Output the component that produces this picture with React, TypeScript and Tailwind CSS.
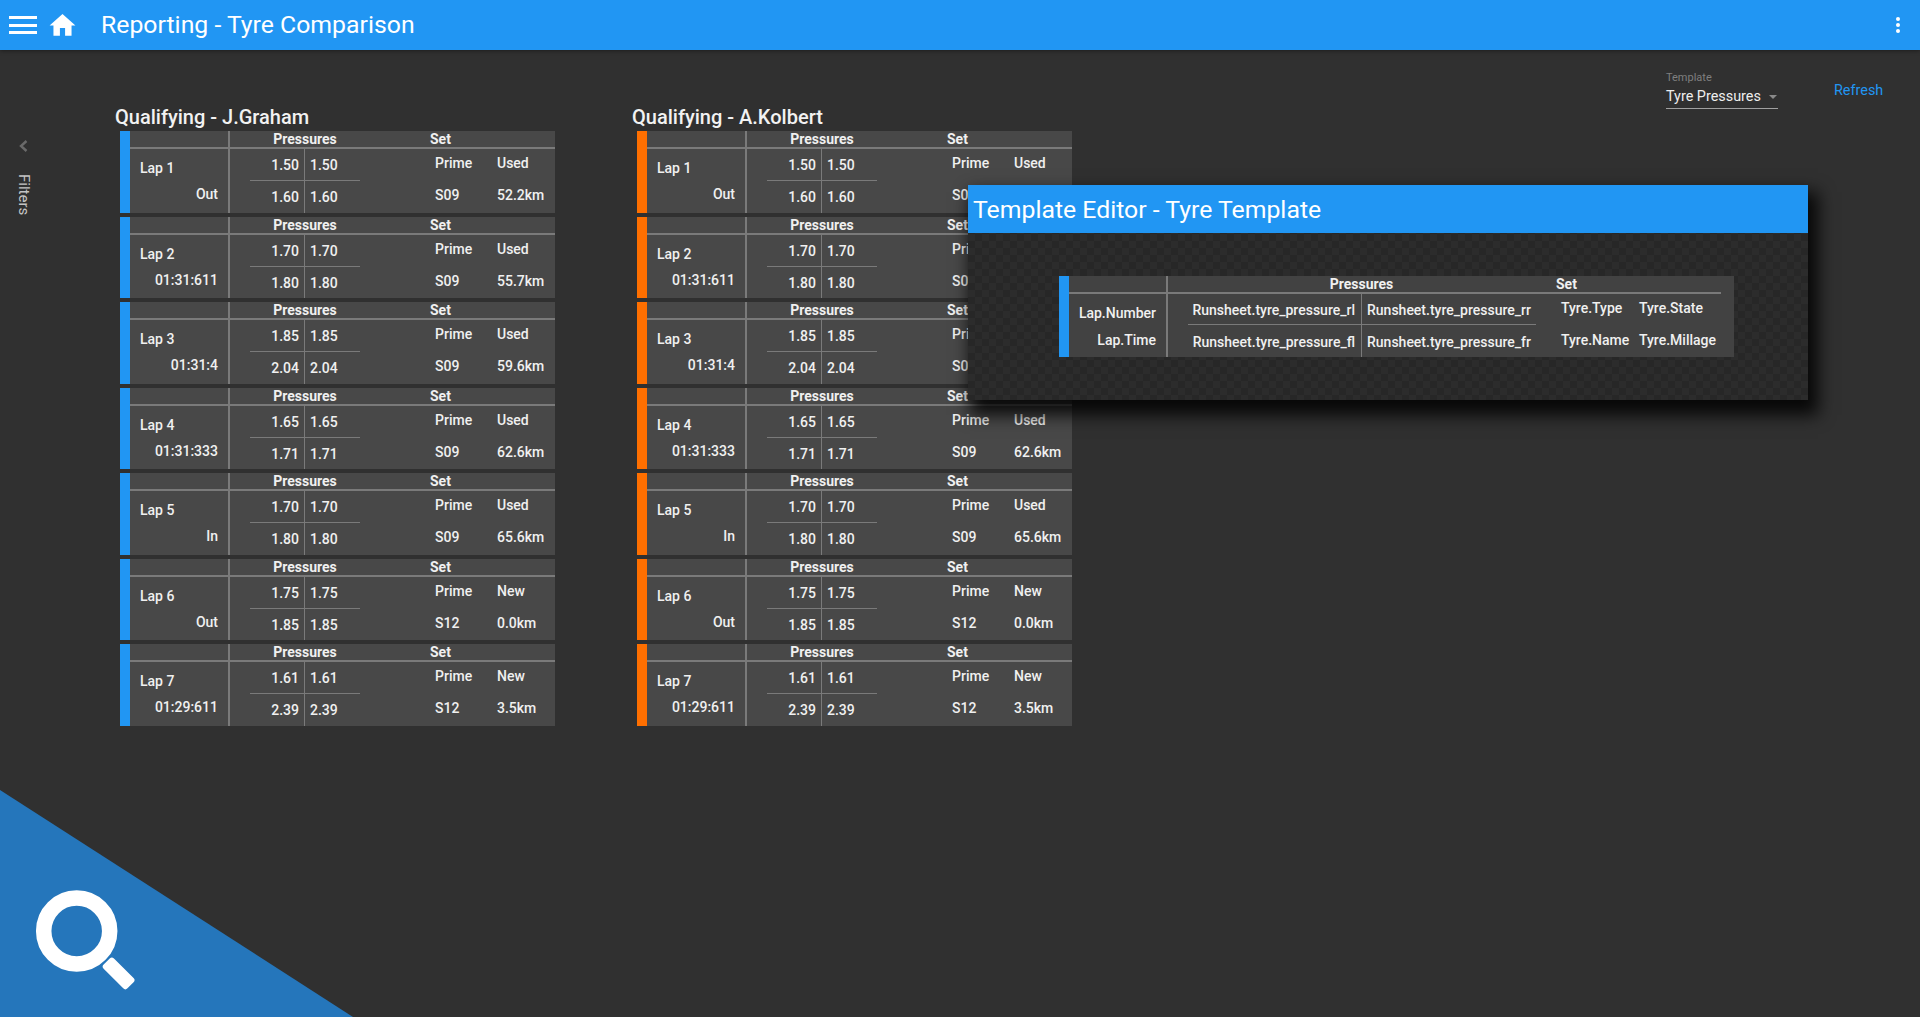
import React from 'react';

type Lap = { lap: string; time: string; rl: string; rr: string; fl: string; fr: string; state: string; name: string; km: string };

const laps: Lap[] = [
  { lap: 'Lap 1', time: 'Out', rl: '1.50', rr: '1.50', fl: '1.60', fr: '1.60', state: 'Used', name: 'S09', km: '52.2km' },
  { lap: 'Lap 2', time: '01:31:611', rl: '1.70', rr: '1.70', fl: '1.80', fr: '1.80', state: 'Used', name: 'S09', km: '55.7km' },
  { lap: 'Lap 3', time: '01:31:4', rl: '1.85', rr: '1.85', fl: '2.04', fr: '2.04', state: 'Used', name: 'S09', km: '59.6km' },
  { lap: 'Lap 4', time: '01:31:333', rl: '1.65', rr: '1.65', fl: '1.71', fr: '1.71', state: 'Used', name: 'S09', km: '62.6km' },
  { lap: 'Lap 5', time: 'In', rl: '1.70', rr: '1.70', fl: '1.80', fr: '1.80', state: 'Used', name: 'S09', km: '65.6km' },
  { lap: 'Lap 6', time: 'Out', rl: '1.75', rr: '1.75', fl: '1.85', fr: '1.85', state: 'New', name: 'S12', km: '0.0km' },
  { lap: 'Lap 7', time: '01:29:611', rl: '1.61', rr: '1.61', fl: '2.39', fr: '2.39', state: 'New', name: 'S12', km: '3.5km' },
];

const LapCard = ({ d, bar }: { d: Lap; bar: string }) => (
  <div className="flex h-[81.5px] w-[435px] bg-[#484848] text-[14px] font-medium leading-4 text-[#f0f0f0]">
    <div className={`w-[10px] shrink-0 ${bar}`}></div>
    <div className="flex min-w-0 flex-1 flex-col">
      <div className="flex h-[18px] shrink-0 border-b-2 border-[#7a7a7a]">
        <div className="w-[100px] shrink-0 border-r-2 border-[#7a7a7a]"></div>
        <div className="w-[150px] text-center font-bold">Pressures</div>
        <div className="pl-[50px] font-bold">Set</div>
      </div>
      <div className="flex flex-1">
        <div className="flex w-[100px] shrink-0 flex-col border-r-2 border-[#7a7a7a] pl-[10px] pr-[10px] pt-[11px]">
          <div>{d.lap}</div>
          <div className="mt-[10px] text-right">{d.time}</div>
        </div>
        <div className="relative flex w-[130px] shrink-0">
          <div className="flex w-[75px] flex-col items-end border-r border-[#7a7a7a] pr-[5px] pt-[8px]">
            <div>{d.rl}</div>
            <div className="mt-4">{d.fl}</div>
          </div>
          <div className="flex flex-col pl-[5px] pt-[8px]">
            <div>{d.rr}</div>
            <div className="mt-4">{d.fr}</div>
          </div>
          <div className="absolute left-[20px] top-[31px] h-px w-[110px] bg-[#7a7a7a]"></div>
        </div>
        <div className="grid flex-1 grid-cols-[62px_1fr] grid-rows-[16px_16px] gap-y-4 pl-[75px] pt-[6px]">
          <div>Prime</div>
          <div>{d.state}</div>
          <div>{d.name}</div>
          <div>{d.km}</div>
        </div>
      </div>
    </div>
  </div>
);

const LapColumn = ({ title, bar }: { title: string; bar: string }) => (
  <div className="w-[452px]">
    <h2 className="h-[26px] text-[20px] font-medium leading-[25px] text-[#f2f2f2]">{title}</h2>
    <div className="ml-[5px] flex flex-col gap-1">
      {laps.map((d) => (
        <LapCard key={d.lap} d={d} bar={bar} />
      ))}
    </div>
  </div>
);

const TemplateEditor = () => (
  <div className="absolute left-[968px] top-[185px] h-[215px] w-[840px] bg-[#292929] bg-[repeating-conic-gradient(#2c2c2c_0%_25%,#272727_0%_50%)] bg-[length:14px_14px] shadow-[6px_11px_16px_4px_rgba(0,0,0,0.85)]">
    <div className="flex h-12 items-center bg-[#2196f3] pl-[5px] pt-px text-[24.8px] text-white">Template Editor - Tyre Template</div>
    <div className="ml-[91px] mt-[43px] flex h-[81px] w-[675px] bg-[#424242] text-[14px] font-medium leading-4 text-[#f0f0f0]">
      <div className="w-[10px] shrink-0 bg-[#2196f3]"></div>
      <div className="flex flex-1 flex-col">
        <div className="mr-[13px] flex h-[18px] shrink-0 border-b-2 border-[#7a7a7a]">
          <div className="w-[99px] shrink-0 border-r-2 border-[#7a7a7a]"></div>
          <div className="w-[387px] text-center font-bold">Pressures</div>
          <div className="pl-px font-bold">Set</div>
        </div>
        <div className="flex flex-1">
          <div className="flex w-[99px] shrink-0 flex-col items-end border-r-2 border-[#7a7a7a] pr-[10px] pt-[11px]">
            <div>Lap.Number</div>
            <div className="mt-[11px]">Lap.Time</div>
          </div>
          <div className="relative flex w-[371px] shrink-0">
            <div className="flex w-[194px] flex-col items-end border-r border-[#7a7a7a] pr-[6px] pt-[8px]">
              <div>Runsheet.tyre_pressure_rl</div>
              <div className="mt-4">Runsheet.tyre_pressure_fl</div>
            </div>
            <div className="flex flex-col pl-[5px] pt-[8px]">
              <div>Runsheet.tyre_pressure_rr</div>
              <div className="mt-4">Runsheet.tyre_pressure_fr</div>
            </div>
            <div className="absolute left-[20px] top-[30px] h-px w-[348px] bg-[#7a7a7a]"></div>
          </div>
          <div className="grid grid-cols-[78px_1fr] grid-rows-[16px_16px] gap-y-4 pl-[22px] pt-[6px]">
            <div>Tyre.Type</div>
            <div>Tyre.State</div>
            <div>Tyre.Name</div>
            <div>Tyre.Millage</div>
          </div>
        </div>
      </div>
    </div>
  </div>
);

export default function App() {
  return (
    <div className="relative flex h-[1017px] w-[1920px] flex-col overflow-hidden bg-[#303030] font-['Roboto',sans-serif]">
      <header className="relative z-10 flex h-[50px] shrink-0 items-center bg-[#2196f3] pl-[9px] pr-[19px] text-white shadow-[0_1px_4px_rgba(0,0,0,0.4)]">
        <div className="flex h-[18px] w-[28px] flex-col justify-between">
          <div className="h-[3px] bg-white"></div>
          <div className="h-[3px] bg-white"></div>
          <div className="h-[3px] bg-white"></div>
        </div>
        <svg className="ml-[10px] h-[31px] w-[31px]" viewBox="0 0 24 24" fill="white">
          <path d="M10 20v-6h4v6h5v-8h3L12 3 2 12h3v8z" />
        </svg>
        <h1 className="ml-[23px] text-[24.8px] leading-none">Reporting - Tyre Comparison</h1>
        <svg className="ml-auto h-[18px] w-[6px]" viewBox="0 0 6 18" fill="white">
          <circle cx="3" cy="3" r="2" />
          <circle cx="3" cy="9" r="2" />
          <circle cx="3" cy="15" r="2" />
        </svg>
      </header>

      <div className="flex flex-1">
        <aside className="flex w-[115px] shrink-0 flex-col items-center pr-[68px] pt-[90px]">
          <svg className="h-[12px] w-[9px]" viewBox="0 0 9 12" fill="none" stroke="#6a6a6a" strokeWidth="2.4">
            <polyline points="7.5,1 2,6 7.5,11" />
          </svg>
          <div className="mt-[22px] text-[15px] leading-4 text-[#c4c4c4] [writing-mode:vertical-rl]">Filters</div>
        </aside>
        <main className="flex flex-1 pt-[55px]">
          <LapColumn title="Qualifying - J.Graham" bar="bg-[#2196f3]" />
          <div className="w-[65px]"></div>
          <LapColumn title="Qualifying - A.Kolbert" bar="bg-[#ff6f00]" />
        </main>
      </div>

      <div className="absolute left-[1666px] top-[72px] w-[112px]">
        <div className="text-[11px] leading-3 text-[#7f7f7f]">Template</div>
        <div className="mt-[3px] flex h-[22px] items-center justify-between border-b border-[#a0a0a0] pb-[1px] text-[14.4px] text-[#eeeeee]">
          <span>Tyre Pressures</span>
          <span className="mr-[1px] h-0 w-0 border-x-[4px] border-t-[4px] border-x-transparent border-t-[#8a8a8a]"></span>
        </div>
      </div>
      <div className="absolute left-[1834px] top-[83px] text-[14.4px] leading-4 text-[#2196f3]">Refresh</div>

      <TemplateEditor />

      <svg className="absolute bottom-0 left-0 h-[227px] w-[353px]" viewBox="0 0 353 227">
        <polygon points="0,0 353,227 0,227" fill="#2576bb" />
        <circle cx="76.7" cy="141" r="33" fill="none" stroke="white" strokeWidth="15.5" />
        <rect x="-16.85" y="-7.3" width="33.7" height="14.6" rx="3" fill="white" transform="translate(118.6 183.4) rotate(45)" />
      </svg>
    </div>
  );
}
